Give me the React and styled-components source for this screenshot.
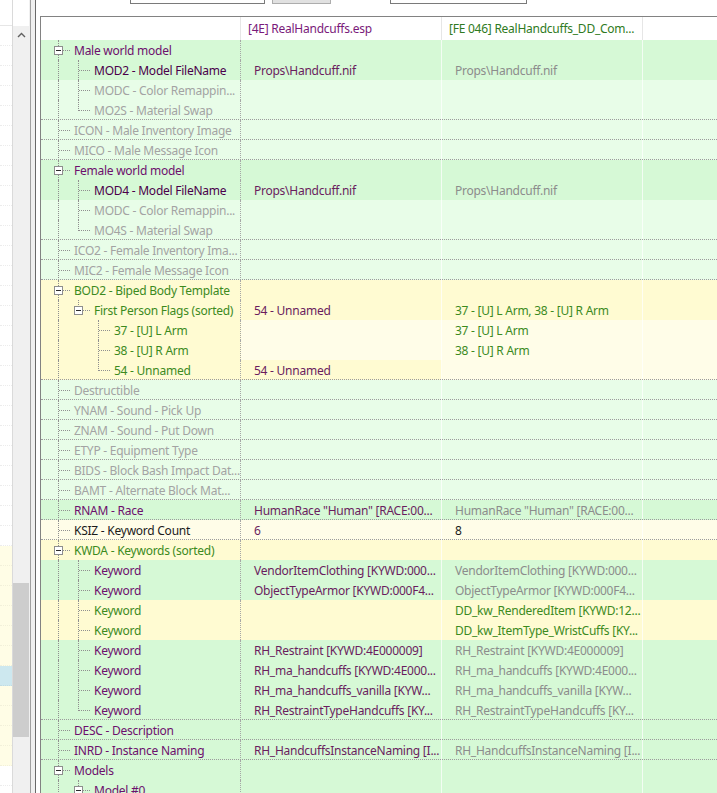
import React from 'react';
import styled, { createGlobalStyle, css } from 'styled-components';

const GlobalStyle = createGlobalStyle`
  html, body { margin: 0; padding: 0; background: #ffffff; overflow: hidden; }
  body { font-family: "Noto Sans", "Open Sans", sans-serif; font-size: 12px; letter-spacing: -0.25px; }
  * { box-sizing: border-box; }
`;

const BG = {
  g: '#d6f9d6',
  lg: '#e8fde8',
  y: '#fffbd2',
  ly: '#fffde8',
  w: '#ffffff',
};

const FG = {
  p: '#6d0f6d',
  dp: '#4a004a',
  gr: '#a3a3a3',
  g: '#3c8a1e',
  k: '#1b1b1b',
  vp: '#6a1d5e',
  vg: '#8c8c8c',
};

/* ---------- tree data ---------- */
const R = (label, level, opts = {}) => ({ label, level, ...opts });

const rows = [
  R('Male world model', 0, { exp: true, c: 'p', bg: 'g' }),
  R('MOD2 - Model FileName', 1, { c: 'dp', bg: 'g', v1: 'Props\\Handcuff.nif', v2: 'Props\\Handcuff.nif', c2: 'vg' }),
  R('MODC - Color Remappin...', 1, { c: 'gr', bg: 'lg' }),
  R('MO2S - Material Swap', 1, { c: 'gr', bg: 'lg' }),
  R('ICON - Male Inventory Image', 0, { c: 'gr', bg: 'lg' }),
  R('MICO - Male Message Icon', 0, { c: 'gr', bg: 'lg' }),
  R('Female world model', 0, { exp: true, c: 'p', bg: 'g' }),
  R('MOD4 - Model FileName', 1, { c: 'dp', bg: 'g', v1: 'Props\\Handcuff.nif', v2: 'Props\\Handcuff.nif', c2: 'vg' }),
  R('MODC - Color Remappin...', 1, { c: 'gr', bg: 'lg' }),
  R('MO4S - Material Swap', 1, { c: 'gr', bg: 'lg' }),
  R('ICO2 - Female Inventory Ima...', 0, { c: 'gr', bg: 'lg' }),
  R('MIC2 - Female Message Icon', 0, { c: 'gr', bg: 'lg' }),
  R('BOD2 - Biped Body Template', 0, { exp: true, c: 'g', bg: 'y' }),
  R('First Person Flags (sorted)', 1, { exp: true, c: 'g', bg: 'y', v1: '54 - Unnamed', v2: '37 - [U] L Arm, 38 - [U] R Arm', c2: 'g' }),
  R('37 - [U] L Arm', 2, { c: 'g', bg: 'y', bgs: ['y', 'ly', 'ly', 'ly'], v2: '37 - [U] L Arm', c2: 'g' }),
  R('38 - [U] R Arm', 2, { c: 'g', bg: 'y', bgs: ['y', 'ly', 'ly', 'ly'], v2: '38 - [U] R Arm', c2: 'g' }),
  R('54 - Unnamed', 2, { c: 'g', bg: 'y', bgs: ['y', 'y', 'ly', 'ly'], v1: '54 - Unnamed' }),
  R('Destructible', 0, { c: 'gr', bg: 'lg' }),
  R('YNAM - Sound - Pick Up', 0, { c: 'gr', bg: 'lg' }),
  R('ZNAM - Sound - Put Down', 0, { c: 'gr', bg: 'lg' }),
  R('ETYP - Equipment Type', 0, { c: 'gr', bg: 'lg' }),
  R('BIDS - Block Bash Impact Dat...', 0, { c: 'gr', bg: 'lg' }),
  R('BAMT - Alternate Block Mat...', 0, { c: 'gr', bg: 'lg' }),
  R('RNAM - Race', 0, { c: 'p', bg: 'g', v1: 'HumanRace "Human" [RACE:00...', v2: 'HumanRace "Human" [RACE:00...', c2: 'vg' }),
  R('KSIZ - Keyword Count', 0, { c: 'k', bg: 'ly', v1: '6', v2: '8', c2: 'k' }),
  R('KWDA - Keywords (sorted)', 0, { exp: true, c: 'g', bg: 'y' }),
  R('Keyword', 1, { c: 'p', bg: 'g', v1: 'VendorItemClothing [KYWD:000...', v2: 'VendorItemClothing [KYWD:000...', c2: 'vg' }),
  R('Keyword', 1, { c: 'p', bg: 'g', v1: 'ObjectTypeArmor [KYWD:000F4...', v2: 'ObjectTypeArmor [KYWD:000F4...', c2: 'vg' }),
  R('Keyword', 1, { c: 'g', bg: 'y', v2: 'DD_kw_RenderedItem [KYWD:12...', c2: 'g' }),
  R('Keyword', 1, { c: 'g', bg: 'y', v2: 'DD_kw_ItemType_WristCuffs [KY...', c2: 'g' }),
  R('Keyword', 1, { c: 'p', bg: 'g', v1: 'RH_Restraint [KYWD:4E000009]', v2: 'RH_Restraint [KYWD:4E000009]', c2: 'vg' }),
  R('Keyword', 1, { c: 'p', bg: 'g', v1: 'RH_ma_handcuffs [KYWD:4E000...', v2: 'RH_ma_handcuffs [KYWD:4E000...', c2: 'vg' }),
  R('Keyword', 1, { c: 'p', bg: 'g', v1: 'RH_ma_handcuffs_vanilla [KYW...', v2: 'RH_ma_handcuffs_vanilla [KYW...', c2: 'vg' }),
  R('Keyword', 1, { c: 'p', bg: 'g', v1: 'RH_RestraintTypeHandcuffs [KY...', v2: 'RH_RestraintTypeHandcuffs [KY...', c2: 'vg' }),
  R('DESC - Description', 0, { c: 'p', bg: 'g' }),
  R('INRD - Instance Naming', 0, { c: 'p', bg: 'g', v1: 'RH_HandcuffsInstanceNaming [I...', v2: 'RH_HandcuffsInstanceNaming [I...', c2: 'vg' }),
  R('Models', 0, { exp: true, c: 'p', bg: 'g' }),
  R('Model #0', 1, { exp: true, c: 'p', bg: 'g' }),
];

/* compute tree guide info */
const flat = rows.map((r, i) => {
  const hasNext = (lvl, from) => {
    if (lvl === 0) return true;
    for (let j = from + 1; j < rows.length; j++) {
      if (rows[j].level < lvl) return false;
      if (rows[j].level === lvl) return true;
    }
    return true;
  };
  const guides = [];
  for (let k = 0; k <= r.level; k++) {
    if (k < r.level) {
      let a = i;
      while (a >= 0 && rows[a].level !== k) a--;
      guides.push({ kind: 'pass', on: hasNext(k, a) });
    } else {
      guides.push({ kind: 'own', down: hasNext(k, i), exp: !!r.exp });
    }
  }
  return { ...r, guides };
});

/* ---------- layout ---------- */
const Screen = styled.div`
  display: flex;
  width: 717px;
  height: 793px;
  overflow: hidden;
  background: #ffffff;
`;

const LeftPane = styled.div`
  display: flex;
  flex: none;
  width: 31px;
  padding-right: 1px;
  border-right: 1px solid #a0a0a0;
  background: #f0f0f0;
`;

const ListArea = styled.div`
  width: 13px;
  flex: none;
  display: flex;
  flex-direction: column;
  background: #ffffff;
  border-right: 1px solid #dadada;
  overflow: hidden;
`;

const ListHeader = styled.div`
  height: 26px;
  flex: none;
  border-bottom: 1px solid #e6e6e6;
  background: #ffffff;
`;

const ListRow = styled.div`
  height: 20px;
  flex: none;
  background: ${p => p.$bg};
  border-bottom: 1px dotted ${p => (p.$bg === '#ffffff' ? '#ececec' : 'rgba(0,0,0,0.05)')};
`;

const ScrollBar = styled.div`
  width: 16px;
  flex: none;
  display: flex;
  flex-direction: column;
  background: #f0f0f0;
`;

const ScrollTop = styled.div`
  height: 26px;
  flex: none;
  background: #ffffff;
`;

const ScrollArrow = styled.div`
  height: 17px;
  flex: none;
  display: flex;
  align-items: center;
  justify-content: center;
`;

const ScrollTrack = styled.div`
  flex: 1;
  display: flex;
  flex-direction: column;
  padding-top: 540px;
`;

const ScrollThumb = styled.div`
  height: 154px;
  flex: none;
  background: #cdcdcd;
`;

const Splitter = styled.div`
  width: 4px;
  flex: none;
  background: #f0f0f0;
`;

const RightPane = styled.div`
  flex: 1;
  display: flex;
  flex-direction: column;
  border-left: 1px solid #696969;
  padding-left: 4px;
  background: #ffffff;
  min-width: 0;
`;

const Toolbar = styled.div`
  height: 16px;
  flex: none;
  display: flex;
  align-items: flex-end;
  padding-bottom: 12px;
  overflow: visible;
`;

const ToolInput = styled.div`
  flex: none;
  height: 22px;
  width: ${p => p.$w}px;
  margin-left: ${p => p.$ml}px;
  border: 1px solid #7a7a7a;
  background: #ffffff;
`;

const ToolButton = styled.div`
  flex: none;
  height: 22px;
  width: ${p => p.$w}px;
  margin-left: ${p => p.$ml}px;
  border: 1px solid #adadad;
  background: #e1e1e1;
`;

const Tree = styled.div`
  flex: 1;
  border-top: 1px solid #828282;
  border-left: 1px solid #828282;
  background: #ffffff;
  overflow: hidden;
`;

const Grid = styled.div`
  display: grid;
  grid-template-columns: 200px 201px 201px 120px;
`;

const HeaderRow = styled(Grid)`
  height: 23px;
  background: #ffffff;
`;

const HeaderCell = styled.div`
  display: flex;
  align-items: center;
  padding-left: 7px;
  border-right: 1px solid #e6e6e6;
  color: ${p => p.$color || '#000'};
  white-space: nowrap;
  overflow: hidden;
`;

const Row = styled(Grid)`
  height: 20px;
  position: relative;
  ${p => p.$top && css`
    &::before {
      content: '';
      position: absolute;
      left: 0; right: 0; top: -1px;
      border-top: 1px dotted #9c9c9c;
      z-index: 2;
    }
  `}
`;

const Cell = styled.div`
  display: flex;
  align-items: center;
  height: 20px;
  padding-left: ${p => (p.$first ? 7 : 13)}px;
  background: ${p => BG[p.$bg] || BG.w};
  color: ${p => FG[p.$c] || '#000'};
  white-space: nowrap;
  overflow: hidden;
  border-right: 1px ${p => (p.$first ? 'dotted #a6a6a6' : 'solid rgba(255,255,255,0.7)')};
`;

const Guide = styled.span`
  position: relative;
  flex: none;
  width: 20px;
  height: 20px;
  ${p => p.$vfull && css`
    &::before {
      content: '';
      position: absolute;
      left: 10px; top: 0; height: 20px;
      border-left: 1px dotted #8f8f8f;
    }
  `}
  ${p => p.$own && css`
    &::before {
      content: '';
      position: absolute;
      left: 10px; top: 0; height: ${p.$down ? 20 : 11}px;
      border-left: 1px dotted #8f8f8f;
    }
    &::after {
      content: '';
      position: absolute;
      left: ${p.$exp ? 15 : 11}px; top: 10px; width: ${p.$exp ? 7 : 11}px;
      border-top: 1px dotted #8f8f8f;
    }
  `}
`;

const ExpandBox = styled.span`
  position: absolute;
  left: 6px;
  top: 6px;
  width: 9px;
  height: 9px;
  border: 1px solid #8e8e8e;
  background: #ffffff;
  z-index: 1;
  &::after {
    content: '';
    position: absolute;
    left: 1px; top: 3px;
    width: 5px; height: 1px;
    background: #2b2b2b;
  }
`;

const Label = styled.span`
  margin-left: 6px;
`;

function TreeLabel({ row }) {
  return (
    <Cell $first $bg={(row.bgs && row.bgs[0]) || row.bg} $c={row.c}>
      {row.guides.map((g, i) =>
        g.kind === 'pass' ? (
          <Guide key={i} $vfull={g.on} />
        ) : (
          <Guide key={i} $own $down={g.down} $exp={g.exp}>
            {g.exp && <ExpandBox />}
          </Guide>
        )
      )}
      <Label>{row.label}</Label>
    </Cell>
  );
}

const leftRows = (() => {
  const out = [];
  for (let i = 0; i < 38; i++) {
    const y = 26 + i * 20;
    let bg = '#ffffff';
    if (y >= 546 && y < 760) bg = '#fffde6';
    if (y >= 666 && y < 686) bg = '#cde8ef';
    out.push(bg);
  }
  return out;
})();

export default function App() {
  return (
    <>
      <GlobalStyle />
      <Screen>
        <LeftPane>
          <ListArea>
            <ListHeader />
            {leftRows.map((bg, i) => (
              <ListRow key={i} $bg={bg} />
            ))}
          </ListArea>
          <ScrollBar>
            <ScrollTop />
            <ScrollArrow>
              <svg width="9" height="6" viewBox="0 0 9 6">
                <path d="M1 5 L4.5 1.5 L8 5" fill="none" stroke="#606060" strokeWidth="1.4" />
              </svg>
            </ScrollArrow>
            <ScrollTrack>
              <ScrollThumb />
            </ScrollTrack>
          </ScrollBar>
        </LeftPane>
        <Splitter />
        <RightPane>
          <Toolbar>
            <ToolInput $ml={90} $w={135} />
            <ToolButton $ml={7} $w={59} />
            <ToolInput $ml={59} $w={137} />
          </Toolbar>
          <Tree>
            <HeaderRow>
              <HeaderCell />
              <HeaderCell $color="#7a1a7a">[4E] RealHandcuffs.esp</HeaderCell>
              <HeaderCell $color="#2f7a22">[FE 046] RealHandcuffs_DD_Com...</HeaderCell>
              <HeaderCell />
            </HeaderRow>
            {flat.map((r, i) => {
              const bgs = r.bgs || [r.bg, r.bg, r.bg, r.bg];
              return (
                <Row key={i} $top={r.level === 0 && i > 0}>
                  <TreeLabel row={r} />
                  <Cell $bg={bgs[1]} $c="vp">{r.v1}</Cell>
                  <Cell $bg={bgs[2]} $c={r.c2}>{r.v2}</Cell>
                  <Cell $bg={bgs[3]} />
                </Row>
              );
            })}
          </Tree>
        </RightPane>
      </Screen>
    </>
  );
}
